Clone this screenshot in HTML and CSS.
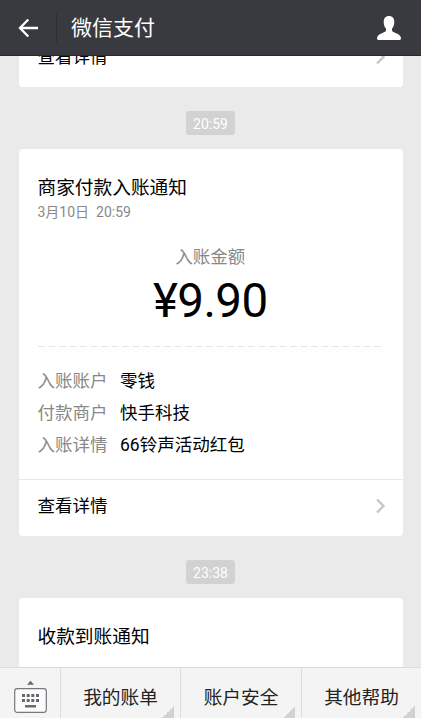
FILE: index.html
```html
<!DOCTYPE html>
<html lang="zh-CN">
<head>
<meta charset="utf-8">
<title>微信支付</title>
<link rel="stylesheet" href="styles.css">
</head>
<body>
<header class="topbar">
  <svg class="back" width="20" height="20" viewBox="0 0 20 20"><path d="M10.3 1.5 2 10l8.3 8.5M2 10h18"/></svg>
  <span class="topbar-rule"></span>
  <h1>微信支付</h1>
  <svg class="person" width="26" height="26" viewBox="0 0 26 26"><path d="M13 1c3.500 0 5.300 2.300 5.300 6 0 3-1 5.200-2.300 6.600v1.600c0 1.200 1.300 1.900 3.500 2.700 3.500 1.300 5.500 2.800 5.500 5.400 0 1.200-.5 1.700-1.500 1.700h-21C1.500 25 1 24.500 1 23.300c0-2.600 2-4.100 5.500-5.400 2.200-.8 3.500-1.500 3.500-2.700v-1.600C8.700 12.200 7.700 10 7.700 7c0-3.700 1.800-6 5.300-6z"/></svg>
</header>
<main class="messages">
  <section class="card card-previous">
    <div class="detail-link"><span>查看详情</span><svg class="chevron" width="12" height="16" viewBox="0 0 12 16"><path d="m2 1.500 6.500 6.500L2 14.500"/></svg></div>
  </section>
  <time class="stamp">20:59</time>
  <section class="card">
    <div class="card-body">
      <h2>商家付款入账通知</h2>
      <p class="date">3月10日&nbsp; 20:59</p>
      <p class="amount-label">入账金额</p>
      <p class="amount">¥9.90</p>
      <svg class="dashes" width="345" height="1" viewBox="0 0 345 1"><path d="M0 .5h345"/></svg>
      <dl class="facts">
        <dt>入账账户</dt><dd>零钱</dd>
        <dt>付款商户</dt><dd>快手科技</dd>
        <dt>入账详情</dt><dd>66铃声活动红包</dd>
      </dl>
    </div>
    <div class="detail-link bordered"><span>查看详情</span><svg class="chevron" width="12" height="16" viewBox="0 0 12 16"><path d="m2 1.500 6.500 6.500L2 14.500"/></svg></div>
  </section>
  <time class="stamp">23:38</time>
  <section class="card card-next">
    <div class="card-body"><h2>收款到账通知</h2></div>
  </section>
</main>
<nav class="menu">
  <div class="keyboard">
    <svg width="34" height="34" viewBox="0 0 34 34">
      <path class="key" d="m16.500 .8 3.500 4h-7z"/>
      <rect class="board" x=".7" y="8.700" width="31.600" height="23.600" rx="2.500"/>
      <path class="key" d="M8 14h3v3H8zm4.700 0h3v3h-3zm4.600 0h3v3h-3zm4.700 0h3v3h-3zM8 19h3v3H8zm4.700 0h3v3h-3zm4.600 0h3v3h-3zm4.700 0h3v3h-3zM11 25h11v2.500H11z"/>
    </svg>
  </div>
  <div class="menu-item">我的账单</div>
  <div class="menu-item">账户安全</div>
  <div class="menu-item">其他帮助</div>
</nav>
</body>
</html>
```
FILE: styles.css
```css
* { box-sizing: border-box; margin: 0; padding: 0; }
body {
  width: 421px;
  height: 718px;
  display: flex;
  flex-direction: column;
  overflow: hidden;
  background: #eaeaea;
  color: #000;
  font-family: Roboto, "Noto Sans CJK SC", sans-serif;
}
h1, h2 { font-weight: 400; }
svg { display: block; }
.topbar {
  flex: none;
  height: 56px;
  padding: 0 19px 0 18px;
  display: flex;
  align-items: center;
  background: #393a3f;
  border-bottom: 1px solid #26272b;
  color: #fff;
}
.back { fill: none; stroke: #fff; stroke-width: 2.3; }
.topbar-rule { width: 1px; height: 28px; margin: 0 14px 0 18px; background: #2c2d31; }
.topbar h1 { flex: 1; padding-top: 1px; font-size: 21px; line-height: 30px; }
.person { fill: #fff; }
.messages {
  flex: 1;
  min-height: 0;
  overflow: hidden;
  padding: 0 18px 0 19px;
  display: flex;
  flex-direction: column;
  align-items: center;
}
.card { flex: none; width: 384px; background: #fff; border-radius: 4px; }
.card-previous { margin-top: -25px; }
.card-body { padding: 25px 20px 0 18.500px; }
.card h2 { font-size: 18.700px; line-height: 28px; }
.date { font-size: 14px; line-height: 20px; color: #888; }
.amount-label { margin-top: 23px; font-size: 17.500px; line-height: 24px; text-align: center; color: #888; }
.amount {
  margin-top: 4px;
  font-size: 47.500px;
  letter-spacing: -.6px;
  line-height: 56px;
  text-align: center;
}
.dashes { margin-top: 17px; fill: none; stroke: #e6e6e6; stroke-width: 1; stroke-dasharray: 7 3.500; }
.facts {
  padding: 18px 0;
  display: grid;
  grid-template-columns: 82.500px 1fr;
  font-size: 17.500px;
  line-height: 32px;
}
.facts dt { color: #888; }
.detail-link {
  height: 56px;
  padding: 0 16px 5px 18.500px;
  display: flex;
  align-items: center;
  justify-content: space-between;
  font-size: 17.500px;
  line-height: 26px;
}
.bordered { height: 57px; border-top: 1px solid #e8e8e8; }
.chevron { fill: none; stroke: #c4c4c8; stroke-width: 2.300; }
.stamp {
  flex: none;
  width: 49px;
  height: 24px;
  margin: 24px 1px 14px 0;
  border-radius: 3px;
  background: #d2d2d2;
  color: #fff;
  font-size: 14px;
  line-height: 26px;
  text-align: center;
}
.card-next { height: 100px; }
.menu {
  flex: none;
  height: 51px;
  display: grid;
  grid-template-columns: 60px 120px 121px 120px;
  background: #f4f4f4;
  border-top: 1px solid #dcdcdc;
}
.keyboard { padding: 12px 0 0 14px; }
.board { fill: #fbfbfb; stroke: #77787c; stroke-width: 1.200; }
.key { fill: #68696f; }
.menu-item {
  padding-top: 16px;
  border-left: 1px solid #dcdcdc;
  background: linear-gradient(135deg, transparent 50%, #d2d2d2 50%) right 6px bottom 0 / 12px 12px no-repeat;
  color: #222;
  font-size: 18.700px;
  line-height: 28px;
  text-align: center;
}
```
